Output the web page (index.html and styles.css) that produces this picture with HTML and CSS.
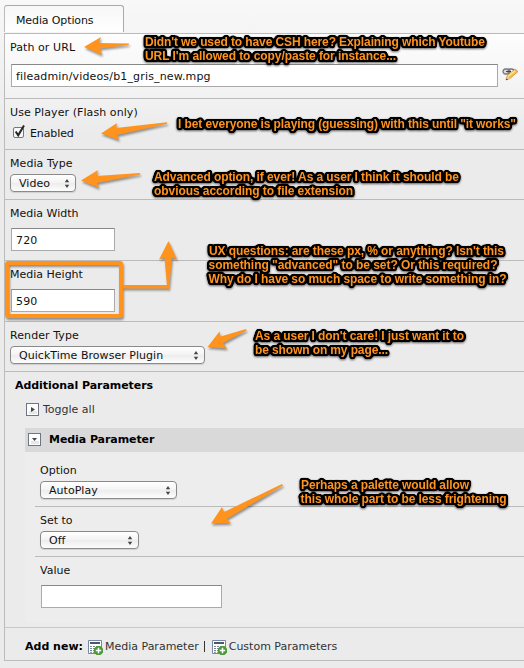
FILE: index.html
```html
<!DOCTYPE html>
<html lang="en">
<head>
<meta charset="utf-8">
<title>Media Options</title>
<link rel="stylesheet" href="styles.css">
</head>
<body>
<svg class="defs" width="0" height="0">
  <filter id="outline" filterUnits="userSpaceOnUse" x="0" y="0" width="524" height="668" color-interpolation-filters="sRGB">
    <feMorphology in="SourceAlpha" operator="dilate" radius="1"/>
    <feGaussianBlur stdDeviation="1"/>
    <feComponentTransfer result="halo"><feFuncA type="linear" slope="7" intercept="-0.5"/></feComponentTransfer>
    <feOffset in="halo" dy="1"/>
    <feGaussianBlur stdDeviation="1"/>
    <feComponentTransfer result="shade"><feFuncA type="linear" slope=".6"/></feComponentTransfer>
    <feMerge><feMergeNode in="shade"/><feMergeNode in="halo"/><feMergeNode in="SourceGraphic"/></feMerge>
  </filter>
  <symbol id="updown" viewBox="0 0 6 9"><path d="M3 0L5.200 3.300H.8zM3 9L.8 5.700H5.200z" fill="#444"/></symbol>
  <symbol id="add" viewBox="0 0 15 15">
    <path d="M.5.5h13v13H.5z" fill="#fff" stroke="#7987a3"/>
    <path d="M2 2h10v2H2z" fill="#4c566c"/>
    <path d="M2 6.500h10M2 8.500h10M2 10.500h10M2 12.300h10" stroke="#788397" stroke-dasharray="2 1"/>
    <path d="M8.500 6h4l2.500 2.500v4L12.500 15h-4L6 12.500v-4z" fill="#4f983b"/>
    <path d="M10.500 7.800v5.400M7.800 10.500h5.400" stroke="#fff" stroke-width="1.500"/>
  </symbol>
</svg>
<main class="page">
  <div class="tab">Media Options</div>
  <form class="panel">
    <section class="row path-row">
      <label class="label loose">Path or URL</label>
      <div class="path-line">
        <div class="input wide">fileadmin/videos/b1_gris_new.mpg</div>
        <svg class="wizard" width="17" height="14" viewBox="0 0 17 14">
          <rect x="1" y="2" width="7" height="5" rx="2.500" fill="#ddd" stroke="#74787d" stroke-width="1.300"/>
          <rect x="6" y="2" width="6" height="5" rx="2.500" fill="none" stroke="#74787d" stroke-width="1.300"/>
          <path d="M4 4.500h5" stroke="#444"/>
          <path d="M4 13l1-4 8-7 3 2.500-8 7z" fill="#f6c04b" stroke="#c78628" stroke-width=".7"/>
          <path d="M6 9l8-6" stroke="#ffe79b" stroke-width="1.400"/>
          <path d="M5 9l3 2.500L4 13z" fill="#edc99b"/><path d="M4.500 11.500L6 12.500 4 13z" fill="#222"/>
          <path d="M13 2l3 2.500-1 .8-3-2.500z" fill="#ef9b72"/>
        </svg>
      </div>
    </section>
    <section class="row player-row">
      <label class="label loose">Use Player (Flash only)</label>
      <div class="check-line">
        <svg width="14" height="15" viewBox="0 0 14 15"><rect x="1.500" y="3.500" width="10" height="10" rx="1.500" fill="#f8f8f8" stroke="#777"/><path d="M3.700 7.500l2.500 3.800L12 1.500" fill="none" stroke="#262626" stroke-width="2"/></svg>
        <span>Enabled</span>
      </div>
    </section>
    <section class="row short">
      <label class="label loose">Media Type</label>
      <div class="select s-video"><span>Video</span><svg width="6" height="9"><use href="#updown"/></svg></div>
    </section>
    <section class="row tall">
      <label class="label">Media Width</label>
      <div class="input number">720</div>
    </section>
    <section class="row tall">
      <label class="label">Media Height</label>
      <div class="input number">590</div>
    </section>
    <section class="row short">
      <label class="label loose">Render Type</label>
      <div class="select s-plugin"><span>QuickTime Browser Plugin</span><svg width="6" height="9"><use href="#updown"/></svg></div>
    </section>
    <section class="extra">
      <h2 class="heading">Additional Parameters</h2>
      <div class="toggle">
        <svg width="13" height="13"><rect x=".5" y=".5" width="12" height="12" fill="#fff" stroke="#6d7682"/><path d="M3 8h8v3H3z" fill="#e4e8ec"/><path d="M5 4l4 2.500L5 9z" fill="#444"/></svg>
        <span>Toggle all</span>
      </div>
      <div class="inner">
        <div class="inner-head">
          <svg width="13" height="13"><rect x=".5" y=".5" width="12" height="12" fill="#fff" stroke="#6d7682"/><path d="M3 8h8v3H3z" fill="#e4e8ec"/><path d="M4 5h5L6.500 8z" fill="#444"/></svg>
          <span>Media Parameter</span>
        </div>
        <div class="inner-rows">
          <div class="inner-row">
            <label class="label">Option</label>
            <div class="select s-auto"><span>AutoPlay</span><svg width="6" height="9"><use href="#updown"/></svg></div>
          </div>
          <div class="inner-row">
            <label class="label">Set to</label>
            <div class="select s-off"><span>Off</span><svg width="6" height="9"><use href="#updown"/></svg></div>
          </div>
          <div class="inner-row last">
            <label class="label">Value</label>
            <div class="input value"></div>
          </div>
        </div>
      </div>
    </section>
    <footer class="footer">
      <b>Add new:</b>
      <svg width="15" height="15"><use href="#add"/></svg><span class="link">Media Parameter</span>
      <i class="bar"></i>
      <svg width="15" height="15"><use href="#add"/></svg><span class="link">Custom Parameters</span>
    </footer>
  </form>
</main>
<svg class="notes" width="524" height="668" viewBox="0 0 524 668">
  <g class="marks">
    <path d="M84 47L101 37 99 43 129 43.500 128.500 45 100 48.500 102 55z"/>
    <path d="M101 133.500L117 123 116 128 167 122.300 167 123.700 117 135 119 140z"/>
    <path d="M81 180.500L98 170 96.500 176 140 173 140 174.500 97 183 99 188z"/>
    <path d="M122 285H167.500V288.500H122z"/>
    <path d="M167.300 289L164.500 257.500 159 259.500 168.500 241 177 259.500 172 257.500 169 289z"/>
    <path d="M207.500 347L219.500 331.500 220.500 336.500 246 329 246.500 330.500 223 343 227 348.500z"/>
    <path d="M211 523.500L222 507 224 512 282 484 283 485.500 226.500 519 231 523z"/>
    <rect class="frame" x="7" y="263" width="114" height="53" rx="1"/>
  </g>
  <g class="says">
    <text x="145" y="46" textLength="340">Didn't we used to have CSH here? Explaining which Youtube</text>
    <text x="145" y="60" textLength="251">URL I'm allowed to copy/paste for instance...</text>
    <text x="178" y="128" textLength="338">I bet everyone is playing (guessing) with this until "it works"</text>
    <text x="154" y="181" textLength="305">Advanced option, if ever! As a user I think it should be</text>
    <text x="154" y="195" textLength="199">obvious according to file extension</text>
    <text x="209" y="255" textLength="295">UX questions: are these px, % or anything? Isn't this</text>
    <text x="208.500" y="269" textLength="289">something "advanced" to be set? Or this required?</text>
    <text x="208.500" y="283" textLength="298">Why do I have so much space to write something in?</text>
    <text x="255" y="340" textLength="209">As a user I don't care! I just want it to</text>
    <text x="255" y="354" textLength="133">be shown on my page...</text>
    <text x="301" y="489" textLength="168">Perhaps a palette would allow</text>
    <text x="300.500" y="503" textLength="206">this whole part to be less frightening</text>
  </g>
</svg>
</body>
</html>
```
FILE: styles.css
```css
* { box-sizing: border-box; }
body {
  margin: 0;
  position: relative;
  width: 524px;
  height: 668px;
  overflow: hidden;
  font: 11px/15px "DejaVu Sans", Verdana, sans-serif;
  color: #111;
  background: #ebebeb linear-gradient(#f8f8f8, #ebebeb) 0 0 / 100% 130px no-repeat;
}
svg { display: block; flex: none; }
.defs { position: absolute; }
.page { padding: 5px 0 0 4px; }
.tab {
  width: 120px;
  height: 27px;
  padding: 7px 0 0 11px;
  border: 1px solid #aaa;
  border-bottom: 0;
  border-left-color: #bbb;
  border-radius: 3px 3px 0 0;
  background: linear-gradient(#f7f7f7, #fff);
  letter-spacing: -.12px;
}
.panel {
  margin-top: 1px;
  border: 1px solid #bbb;
  border-right: 0;
  background: #ebebeb linear-gradient(#fdfdfd, #ebebeb) 0 0 / 100% 100px no-repeat;
}
.row { border-bottom: 1px solid #bbb; padding: 6px 0 0 5px; }
.path-row { height: 65px; }
.player-row { height: 51px; }
.short { height: 50px; }
.tall { height: 61px; }
.label { display: block; height: 15px; white-space: nowrap; }
.loose { letter-spacing: .08px; }
.path-line { display: flex; margin-top: 9px; }
.input {
  height: 23px;
  margin-left: 1px;
  padding: 4px 0 0 4px;
  background: #fff;
  border: 1px solid #aaa;
  border-top-color: #888;
  letter-spacing: .16px;
}
.wide { width: 487px; }
.wizard { margin: 3px 0 0 4px; }
.number { width: 104px; margin-top: 7px; }
.value { width: 181px; margin-top: 7px; }
.check-line { display: flex; margin: 0 0 0 2px; padding-top: 4px; }
.check-line span { padding: 2px 0 0 4px; letter-spacing: -.1px; }
.select {
  display: flex;
  align-items: center;
  justify-content: space-between;
  height: 18px;
  margin-top: 3px;
  padding: 1px 5px 0 8px;
  border: 1px solid #8a8a8a;
  border-radius: 4px;
  background: linear-gradient(#fff 0%, #f3f3f3 50%, #ececec 51%, #fdfdfd);
  box-shadow: 0 1px 1px rgba(0, 0, 0, .12);
  white-space: nowrap;
  letter-spacing: .04px;
}
.s-video { width: 66px; }
.s-plugin { width: 195px; }
.s-auto { width: 137px; }
.s-off { width: 99px; }
.extra { height: 256px; padding-top: 6px; border-bottom: 1px solid #c8c8c8; }
.heading { margin: 0 0 0 10px; font-size: 11px; line-height: 15px; color: #000; letter-spacing: -.05px; }
.toggle { display: flex; margin: 10px 0 0 21px; height: 13px; align-items: center; color: #333; }
.toggle span { margin-left: 4px; }
.inner { margin: 12px 0 0 20px; height: 194px; background: #ededed; }
.inner-head {
  display: flex;
  align-items: center;
  height: 24px;
  padding: 0 0 1px 3px;
  background: #d9d9d9;
  font-weight: bold;
  color: #000;
  letter-spacing: -.07px;
}
.inner-head span { margin-left: 8px; }
.inner-rows { padding: 5px 0 0 10px; }
.inner-row { height: 50px; padding: 6px 0 0 5px; border-bottom: 1px solid #bbb; }
.last { border: 0; }
.footer { display: flex; height: 32px; align-items: center; padding: 5px 0 0 20px; color: #333; white-space: nowrap; }
.footer b { margin-right: 5px; color: #000; }
.footer svg { margin-top: 2px; }
.link { margin-left: 2px; }
.bar { width: 1px; height: 11px; margin: 0 7px 0 5px; background: #333; }
.notes { position: absolute; left: 0; top: 0; pointer-events: none; }
.marks { fill: #ff931e; filter: drop-shadow(1px 2px 1px rgba(0, 0, 0, .4)); }
.frame { fill: none; stroke: #ff931e; stroke-width: 4px; }
.says {
  font: bold 12px "Liberation Sans", Arial, sans-serif;
  fill: #ff931e;
  filter: url(#outline);
}
```
